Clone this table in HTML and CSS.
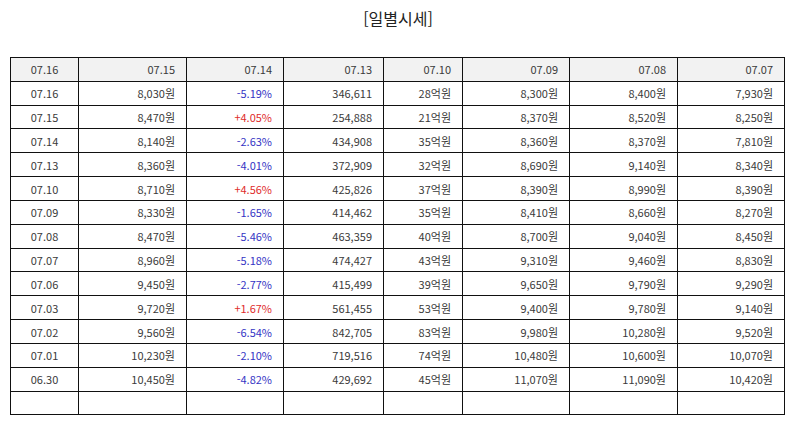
FILE: index.html
```html
<!DOCTYPE html>
<html lang="ko">
<head>
<meta charset="utf-8">
<link rel="stylesheet" href="styles.css">
</head>
<body>
<div class="page">
  <h2 class="title">[일별시세]</h2>
  <div class="frame">
  <table class="daily">
    <thead>
      <tr><th class="ctr c1">07.16</th><th class="c2">07.15</th><th class="c3">07.14</th><th class="c4">07.13</th><th class="c5">07.10</th><th class="c6">07.09</th><th class="c7">07.08</th><th class="c8">07.07</th></tr>
    </thead>
    <tbody>
      <tr><td class="ctr">07.16</td><td>8,030원</td><td class="dn">-5.19%</td><td>346,611</td><td>28억원</td><td>8,300원</td><td>8,400원</td><td>7,930원</td></tr>
      <tr><td class="ctr">07.15</td><td>8,470원</td><td class="up">+4.05%</td><td>254,888</td><td>21억원</td><td>8,370원</td><td>8,520원</td><td>8,250원</td></tr>
      <tr><td class="ctr">07.14</td><td>8,140원</td><td class="dn">-2.63%</td><td>434,908</td><td>35억원</td><td>8,360원</td><td>8,370원</td><td>7,810원</td></tr>
      <tr><td class="ctr">07.13</td><td>8,360원</td><td class="dn">-4.01%</td><td>372,909</td><td>32억원</td><td>8,690원</td><td>9,140원</td><td>8,340원</td></tr>
      <tr><td class="ctr">07.10</td><td>8,710원</td><td class="up">+4.56%</td><td>425,826</td><td>37억원</td><td>8,390원</td><td>8,990원</td><td>8,390원</td></tr>
      <tr><td class="ctr">07.09</td><td>8,330원</td><td class="dn">-1.65%</td><td>414,462</td><td>35억원</td><td>8,410원</td><td>8,660원</td><td>8,270원</td></tr>
      <tr><td class="ctr">07.08</td><td>8,470원</td><td class="dn">-5.46%</td><td>463,359</td><td>40억원</td><td>8,700원</td><td>9,040원</td><td>8,450원</td></tr>
      <tr><td class="ctr">07.07</td><td>8,960원</td><td class="dn">-5.18%</td><td>474,427</td><td>43억원</td><td>9,310원</td><td>9,460원</td><td>8,830원</td></tr>
      <tr><td class="ctr">07.06</td><td>9,450원</td><td class="dn">-2.77%</td><td>415,499</td><td>39억원</td><td>9,650원</td><td>9,790원</td><td>9,290원</td></tr>
      <tr><td class="ctr">07.03</td><td>9,720원</td><td class="up">+1.67%</td><td>561,455</td><td>53억원</td><td>9,400원</td><td>9,780원</td><td>9,140원</td></tr>
      <tr><td class="ctr">07.02</td><td>9,560원</td><td class="dn">-6.54%</td><td>842,705</td><td>83억원</td><td>9,980원</td><td>10,280원</td><td>9,520원</td></tr>
      <tr><td class="ctr">07.01</td><td>10,230원</td><td class="dn">-2.10%</td><td>719,516</td><td>74억원</td><td>10,480원</td><td>10,600원</td><td>10,070원</td></tr>
      <tr><td class="ctr">06.30</td><td>10,450원</td><td class="dn">-4.82%</td><td>429,692</td><td>45억원</td><td>11,070원</td><td>11,090원</td><td>10,420원</td></tr>
      <tr><td class="ctr"></td><td></td><td></td><td></td><td></td><td></td><td></td><td></td></tr>
    </tbody>
  </table>
  </div>
</div>
</body>
</html>
```
FILE: styles.css
```css
html, body {
  margin: 0;
  padding: 0;
  background: #ffffff;
  overflow: hidden;
}
body {
  font-family: "Noto Sans CJK KR", "Noto Sans", sans-serif;
  color: #333333;
}
.page {
  padding: 8px 0 0 10px;
  width: 775px;
}
.title {
  margin: 0;
  font-size: 16px;
  font-weight: 400;
  line-height: 20px;
  text-align: center;
  color: #222222;
  padding-left: 1px;
  height: 49px;
}
.frame {
  width: 775px;
  border-left: 1px solid #111111;
  border-top: 1px solid #111111;
  box-sizing: border-box;
}
.daily {
  width: 774px;
  border-collapse: separate;
  border-spacing: 0;
  table-layout: fixed;
  font-size: 11px;
}
.daily th,
.daily td {
  box-sizing: border-box;
  border-right: 1px solid #111111;
  border-bottom: 1px solid #111111;
  padding: 0 11px 0 4px;
  text-align: right;
  font-weight: 400;
  line-height: 14px;
  white-space: nowrap;
  color: #3a3a3a;
  overflow: hidden;
}
.daily .c1 { width: 68px; }
.daily .c2 { width: 108px; }
.daily .c3 { width: 97px; }
.daily .c4 { width: 100px; }
.daily .c5 { width: 79px; }
.daily .c6 { width: 107px; }
.daily .c7 { width: 108px; }
.daily .c8 { width: 107px; }
.daily tr {
  height: 23.83px;
}
.daily th {
  background: #f2f2f2;
}
.daily .ctr {
  text-align: center;
  padding: 0 4px;
}
.daily .dn { color: #3434c4; }
.daily .up { color: #e02b2b; }
```
